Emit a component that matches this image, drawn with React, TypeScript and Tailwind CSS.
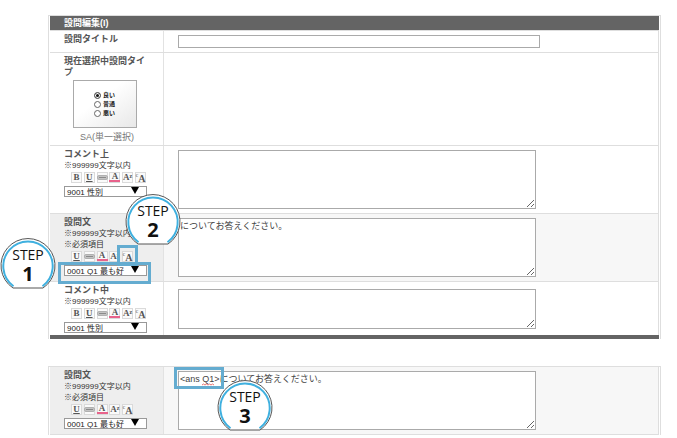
import type { ReactNode } from "react";

function StepBadge({ step, className }: { step: number; className: string }) {
  return (
    <div className={`absolute z-20 h-[51px] w-14 font-['Open_Sans','Noto_Sans',sans-serif] text-[#111] ${className}`}>
      <svg viewBox="0 0 56 51" className="absolute inset-0 h-full w-full" aria-hidden="true">
        <path d="M13 50 A27 27 0 1 1 43 50 Z" fill="#fff" stroke="#555" strokeWidth="1" strokeLinejoin="round" />
        <path d="M13.5 48.2 A24.7 24.7 0 1 1 42.5 48.2" fill="none" stroke="#3fb0df" strokeWidth="2" />
      </svg>
      <div className="relative flex flex-col items-center pt-2 text-center">
        <span className="text-[14px] leading-[18px]">STEP</span>
        <span className="text-[20px] leading-[20px] font-bold">{step}</span>
      </div>
    </div>
  );
}

function Highlight({ className }: { className: string }) {
  return <div className={`pointer-events-none absolute z-10 border-[3px] border-[#64acd0] ${className}`} />;
}

function ToolButton({ label, children }: { label: string; children: ReactNode }) {
  return (
    <button
      type="button"
      aria-label={label}
      className="relative flex h-[11px] w-[11px] items-center justify-center border border-[#dadada] bg-[#fafafa] font-['Liberation_Serif',serif] text-[9px] leading-[9px] font-bold text-[#555]"
    >
      {children}
    </button>
  );
}

function Toolbar({ bold = true, children }: { bold?: boolean; children?: ReactNode }) {
  return (
    <div className={`relative mt-px ml-[7px] flex justify-between ${bold ? "w-[75px]" : "w-[62px]"}`}>
      {bold && <ToolButton label="太字">B</ToolButton>}
      <ToolButton label="下線">
        <span className="underline">U</span>
      </ToolButton>
      <ToolButton label="リンク">
        <svg viewBox="0 0 11 5" className="h-[5px] w-[11px] shrink-0" aria-hidden="true">
          <rect x="0.5" y="0.5" width="10" height="4" rx="1.5" fill="#c4c4c4" stroke="#b0b0b0" />
          <path d="M2 2.5h7" stroke="#8a8a8a" />
        </svg>
      </ToolButton>
      <ToolButton label="文字色">
        <span className="w-[11px] shrink-0 border-b-2 border-[#e8638c] text-center leading-[7px]">A</span>
      </ToolButton>
      <ToolButton label="文字サイズ">
        A<span className="self-start text-[6px] leading-[6px]">z</span>
      </ToolButton>
      <ToolButton label="回答引用">
        <span className="self-start text-[6px] leading-[5px] text-[#999]">c</span>
        <span className="pt-0.5 text-[10px]">A</span>
      </ToolButton>
      {children}
    </div>
  );
}

function VariableSelect({ label, value, children }: { label: string; value: string; children?: ReactNode }) {
  return (
    <div className="relative mt-[3px] w-[83px]">
      <select
        aria-label={label}
        defaultValue={value}
        className="block h-[11px] w-full appearance-none overflow-hidden border border-[#999] bg-white pr-4 pl-0.5 text-[8px] leading-[11px] text-[#222]"
      >
        <option value={value}>{value}</option>
      </select>
      <svg viewBox="0 0 8 7" className="pointer-events-none absolute top-px right-2 h-[7px] w-2" aria-hidden="true">
        <path d="M0 0h8L4 7z" fill="#000" />
      </svg>
      {children}
    </div>
  );
}

function Row({
  title,
  htmlFor,
  notes = [],
  shaded = false,
  last = false,
  tools,
  children,
}: {
  title: string;
  htmlFor?: string;
  notes?: string[];
  shaded?: boolean;
  last?: boolean;
  tools?: ReactNode;
  children?: ReactNode;
}) {
  return (
    <div className={`grid grid-cols-[114px_1fr] ${last ? "" : "border-b border-[#dedede]"}`}>
      <div className={`border-r border-[#e2e2e2] pt-[3px] pr-4 pb-0.5 pl-[14px] ${shaded ? "bg-[#eeeeee]" : "bg-white"}`}>
        {htmlFor ? (
          <label htmlFor={htmlFor} className="block text-[9px] leading-[11px] font-bold text-[#555]">
            {title}
          </label>
        ) : (
          <div className="text-[9px] leading-[11px] font-bold text-[#555]">{title}</div>
        )}
        {notes.map((n) => (
          <p key={n} className="text-[8px] leading-[11px] whitespace-nowrap text-[#333]">
            {n}
          </p>
        ))}
        {tools}
      </div>
      <div className={`flex items-center py-1 pr-4 pl-[14px] ${shaded ? "bg-[#f7f7f7]" : "bg-white"}`}>{children}</div>
    </div>
  );
}

function Area({ id, value = "", short = false, children }: { id: string; value?: string; short?: boolean; children?: ReactNode }) {
  return (
    <div className="relative w-full max-w-[358px]">
      <textarea
        id={id}
        defaultValue={value}
        spellCheck={false}
        className={`block w-full resize border border-[#aaa] bg-white px-px py-0.5 text-[9px] leading-[11px] text-[#444] ${short ? "h-10" : "h-[59px]"}`}
      />
      {children}
    </div>
  );
}

const LIMIT = "※999999文字以内";
const REQUIRED = "※必須項目";
const CHOICES = ["良い", "普通", "悪い"];

export default function App() {
  return (
    <main className="bg-white pt-[15px] pr-4 pb-[3px] pl-12 font-['Liberation_Sans','Noto_Sans_CJK_JP',sans-serif]">
      <section className="border-x border-t border-[#dedede] px-px">
        <h1 className="h-[14px] bg-[#646464] pl-[14px] text-[9px] leading-[14px] font-bold text-white">設問編集(I)</h1>
        <div className="border-t border-r border-[#dedede]">
          <Row title="設問タイトル" htmlFor="q-title">
            <input id="q-title" type="text" className="block h-[13px] w-full max-w-[362px] border border-[#aaa] bg-white px-0.5 text-[9px]" />
          </Row>
          <Row
            title="現在選択中設問タイプ"
            tools={
              <>
                <fieldset className="mt-0.5 ml-[9px] flex h-12 w-16 flex-col justify-center border border-[#aaa] bg-linear-to-br from-white from-40% to-[#e8e8e8] pl-5">
                  {CHOICES.map((c, i) => (
                    <label key={c} className="flex h-[9px] items-center gap-0.5 text-[6px] leading-[9px] font-bold text-[#222]">
                      <input
                        type="radio"
                        name="sample"
                        defaultChecked={i === 0}
                        className="h-[7px] w-[7px] appearance-none rounded-full border border-[#666] bg-white checked:bg-[#111] checked:shadow-[inset_0_0_0_1px_#fff]"
                      />
                      {c}
                    </label>
                  ))}
                </fieldset>
                <p className="mt-1 ml-4 text-[9px] leading-[11px] whitespace-nowrap text-[#777]">SA(単一選択)</p>
              </>
            }
          />
          <Row
            title="コメント上"
            htmlFor="comment-top"
            notes={[LIMIT]}
            tools={
              <>
                <Toolbar />
                <VariableSelect label="コメント上の変数" value="9001 性別" />
              </>
            }
          >
            <Area id="comment-top" />
          </Row>
          <Row
            title="設問文"
            htmlFor="q-text"
            notes={[LIMIT, REQUIRED]}
            shaded
            tools={
              <>
                <Toolbar bold={false}>
                  <Highlight className="-top-[6px] left-[46px] h-[21px] w-[21px]" />
                  <StepBadge step={2} className="-top-[57px] left-[54px]" />
                </Toolbar>
                <VariableSelect label="設問文の変数" value="0001 Q1 最も好">
                  <Highlight className="-top-[3px] -left-[6px] h-[22px] w-[93px]" />
                  <StepBadge step={1} className="-top-[27px] -left-16" />
                </VariableSelect>
              </>
            }
          >
            <Area id="q-text" value="についてお答えください。" />
          </Row>
          <Row
            title="コメント中"
            htmlFor="comment-mid"
            notes={[LIMIT]}
            last
            tools={
              <>
                <Toolbar />
                <VariableSelect label="コメント中の変数" value="9001 性別" />
              </>
            }
          >
            <Area id="comment-mid" short />
          </Row>
        </div>
        <div className="h-1 bg-[#646464]" />
      </section>

      <section className="mt-[27px] border-x border-t border-[#dedede] px-px">
        <div className="border-r border-[#dedede]">
          <Row
            title="設問文"
            htmlFor="q-result"
            notes={[LIMIT, REQUIRED]}
            shaded
            tools={
              <>
                <Toolbar bold={false} />
                <VariableSelect label="設問文の変数(入力後)" value="0001 Q1 最も好" />
              </>
            }
          >
            <Area id="q-result" value="<ans Q1>についてお答えください。">
              <svg viewBox="0 0 12 3" className="pointer-events-none absolute top-3 left-6 h-[3px] w-3" aria-hidden="true">
                <path d="M0 2 L1.5 1 L3 2 L4.5 1 L6 2 L7.5 1 L9 2 L10.5 1 L12 2" fill="none" stroke="#e05050" strokeWidth="0.8" />
              </svg>
              <Highlight className="-top-1 -left-1 h-[22px] w-[50px]" />
              <StepBadge step={3} className="top-[9px] left-[39px]" />
            </Area>
          </Row>
        </div>
      </section>
    </main>
  );
}
